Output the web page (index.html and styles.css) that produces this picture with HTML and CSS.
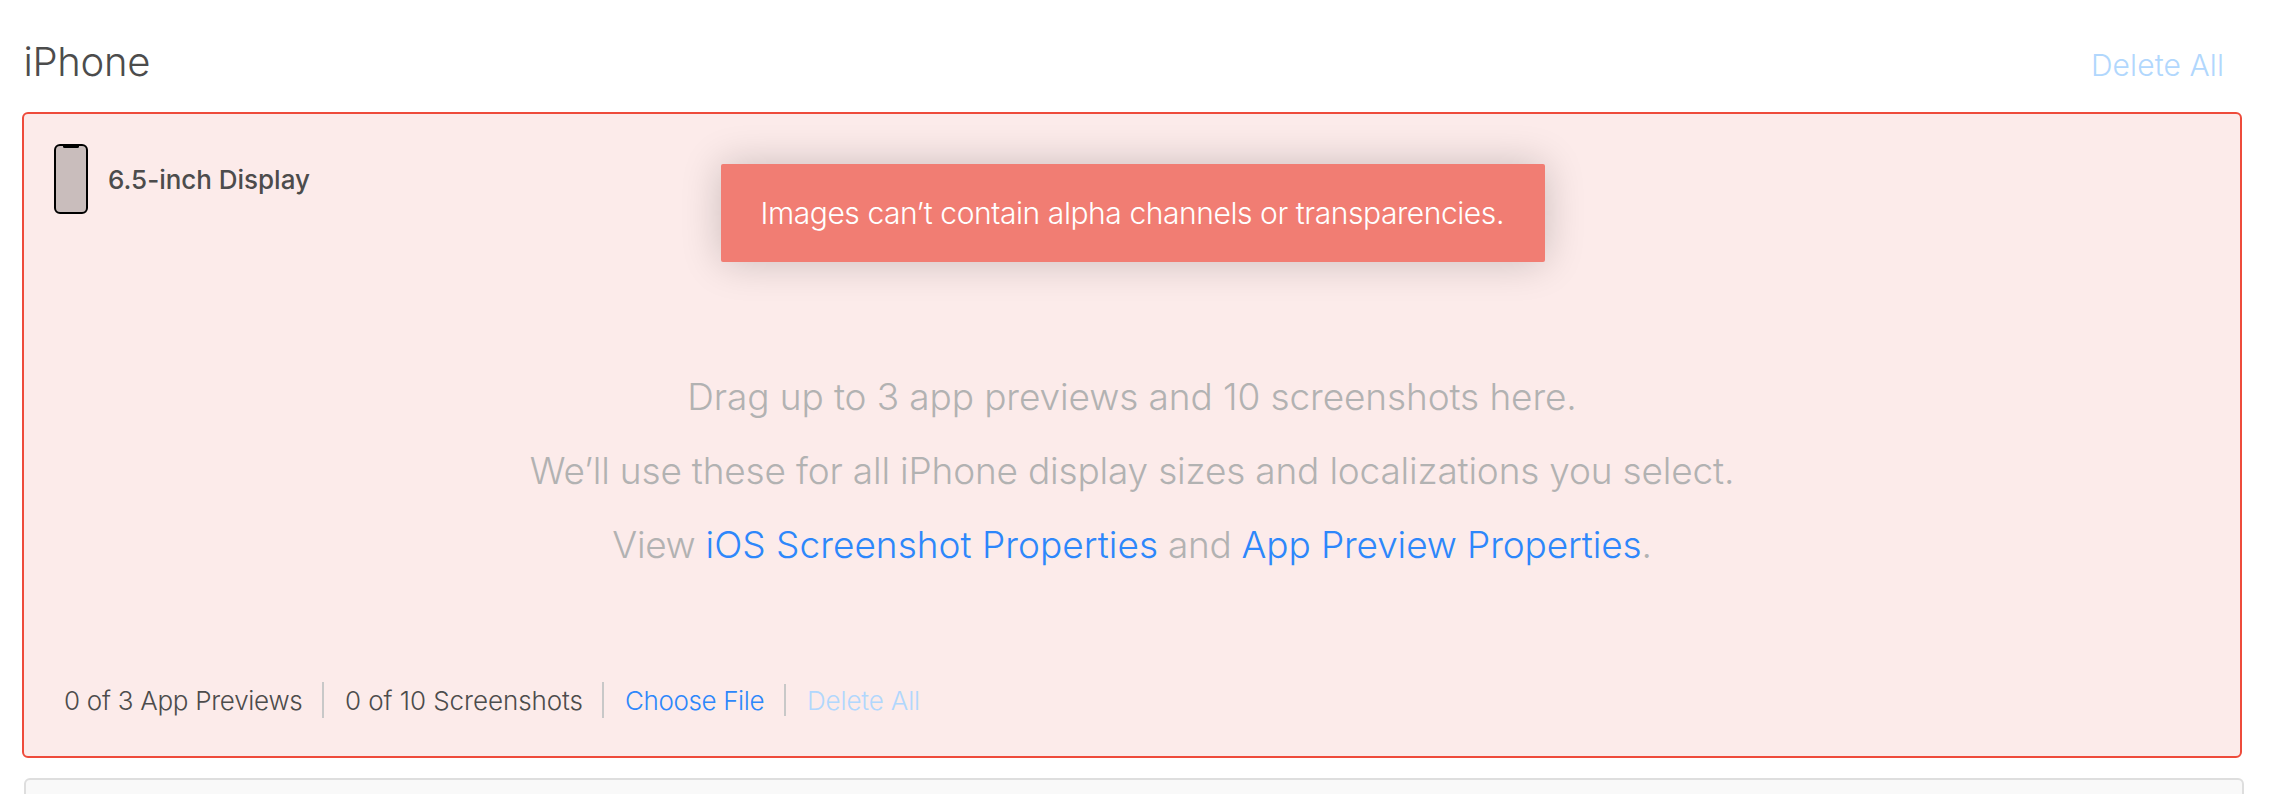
FILE: index.html
```html
<!DOCTYPE html>
<html lang="en">
<head>
<meta charset="utf-8">
<title>App Previews and Screenshots</title>
<link rel="stylesheet" href="styles.css">
</head>
<body>
<main class="page">
  <header class="section-head">
    <h2 class="section-title">iPhone</h2>
    <span class="delete-all delete-all-head">Delete All</span>
  </header>
  <section class="panel panel-error">
    <div class="device">
      <svg class="device-icon" width="34" height="70" viewBox="0 0 34 70">
        <rect x="1" y="1" width="32" height="68" rx="5" fill="#c9bdbc" stroke="#000" stroke-width="2"/>
        <path d="M9 1H25V2.5Q25 4 23.500 4H10.500Q9 4 9 2.500Z" fill="#000"/>
      </svg>
      <span class="device-name">6.5-inch Display</span>
    </div>
    <div class="alert"><span class="alert-text">Images can’t contain alpha channels or transparencies.</span></div>
    <div class="hint">
      <p class="hint-line line-a">Drag up to 3 app previews and 10 screenshots here.</p>
      <p class="hint-line line-b">We’ll use these for all iPhone display sizes and localizations you select.</p>
      <p class="hint-line line-c">View <a class="link">iOS Screenshot Properties</a> and <a class="link link-preview">App Preview Properties</a>.</p>
    </div>
    <footer class="actions">
      <span class="action previews">0 of 3 App Previews</span>
      <span class="action shots">0 of 10 Screenshots</span>
      <span class="action choose">Choose File</span>
      <span class="action delete-all delete-foot">Delete All</span>
    </footer>
  </section>
  <section class="panel panel-next"></section>
</main>
</body>
</html>
```
FILE: styles.css
```css
* { box-sizing: border-box; }
body { margin: 0; background: #fff; color: #4c4c4c; font-family: Inter, "Liberation Sans", sans-serif; font-weight: 300; overflow: hidden; }
.page { height: 794px; padding: 0 36px 0 22px; overflow: hidden; }
.section-head { height: 112px; display: flex; justify-content: space-between; padding: 38px 20px 0 1.5px; }
.section-title { margin: 0; font-size: 40px; line-height: 48px; font-weight: 300; letter-spacing: -0.3px; }
.delete-all { color: #b1d7fd; }
.delete-all-head { font-size: 30px; line-height: 36px; padding-top: 9px; letter-spacing: 0.1px; }
.panel { border: 2px solid; border-radius: 6px; }
.panel-error { position: relative; width: 2220px; height: 646px; border-color: #ee4b3b; background: #fcebea; }
.device { display: flex; align-items: center; gap: 20px; padding: 30px 0 0 30px; }
.device-name { font-size: 26px; font-weight: 500; line-height: 32px; letter-spacing: -0.02px; padding-top: 1px; }
.device-icon { display: block; }
.alert { position: absolute; top: 50px; left: 696.5px; width: 824px; height: 98px; border-radius: 2px; background: #f17d73; color: #fff; box-shadow: 0 0 40px rgba(0,0,0,.2); display: flex; align-items: center; padding-left: 40px; font-size: 30px; letter-spacing: -0.43px; white-space: nowrap; }
.hint { padding-top: 146px; text-align: center; color: #b2b2b2; }
.hint-line { margin: 0; font-size: 37px; line-height: 74px; }
.line-a { letter-spacing: -0.1px; }
.line-b { letter-spacing: -0.18px; }
.line-c { letter-spacing: -0.35px; }
.link { color: #2d87fb; letter-spacing: 0.03px; }
.link-preview { letter-spacing: -0.12px; }
.actions { display: flex; align-items: center; height: 36px; margin-top: 100px; padding-left: 40px; font-size: 26px; }
.action { height: 36px; line-height: 38px; white-space: nowrap; }
.action + .action { border-left: 2px solid #c8c8c8; padding-left: 21px; }
.previews { width: 258px; letter-spacing: -0.28px; }
.shots { width: 280px; letter-spacing: -0.06px; }
.choose { width: 182px; color: #2d87fb; letter-spacing: -0.38px; }
.actions .delete-foot { height: 32px; line-height: 34px; letter-spacing: -0.15px; }
.panel-next { width: 2220px; height: 60px; margin: 20px 0 0 2px; border-color: #dedede; background: #f9f9f9; }
```
